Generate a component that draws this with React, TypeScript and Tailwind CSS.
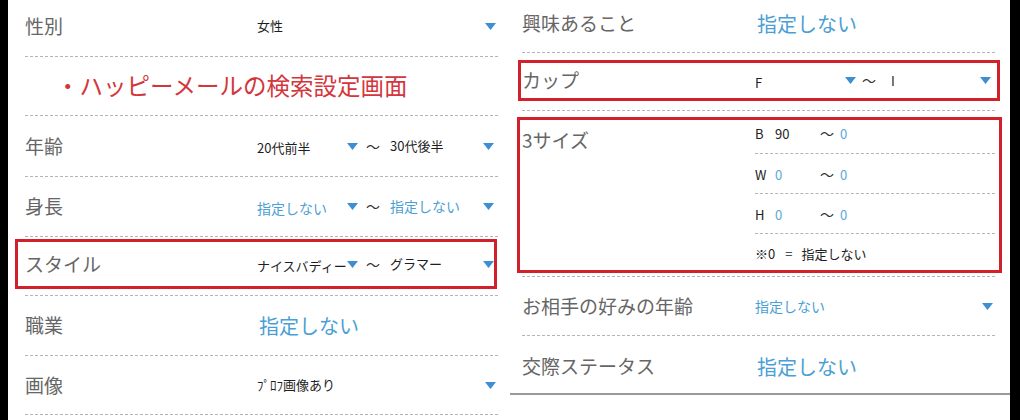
const font = { fontFamily: '"Noto Sans CJK JP", "Noto Sans", sans-serif' };

function Arrow() {
  return (
    <svg width="11" height="7" viewBox="0 0 11 7" className="shrink-0">
      <polygon points="0,0 11,0 5.5,7" fill="#3d8fd3" />
    </svg>
  );
}

function Value({ text, blue }: { text: string; blue?: boolean }) {
  return blue ? (
    <span className="whitespace-nowrap text-[14px] text-[#4c9fd4]">{text}</span>
  ) : (
    <span className="whitespace-nowrap text-[13px] text-[#1e1e1e]">{text}</span>
  );
}

function Range({
  from,
  to,
  blue,
  w1,
  gap,
  w2,
}: {
  from: string;
  to: string;
  blue?: boolean;
  w1: number;
  gap: number;
  w2: number;
}) {
  return (
    <div className="flex items-center">
      <div className="flex items-center" style={{ width: w1 }}>
        <span className="w-[90px] shrink-0 overflow-visible">
          <Value text={from} blue={blue} />
        </span>
        <span className="ml-auto flex">
          <Arrow />
        </span>
      </div>
      <span className="ml-[8px] w-[16px] text-[14px] text-[#333]">～</span>
      <div className="flex items-center" style={{ width: w2, marginLeft: gap }}>
        <Value text={to} blue={blue} />
        <span className="ml-auto flex">
          <Arrow />
        </span>
      </div>
    </div>
  );
}

function Single({ text, blue }: { text: string; blue?: boolean }) {
  return (
    <div className="flex flex-1 items-center pr-[2px]">
      <Value text={text} blue={blue} />
      <span className="ml-auto flex">
        <Arrow />
      </span>
    </div>
  );
}

function Label({ text, w }: { text: string; w: string }) {
  return <div className={`${w} shrink-0 text-[19px] text-[#666]`}>{text}</div>;
}

const dashed = 'border-b border-dashed border-[#b5b5b5]';

function LeftColumn() {
  return (
    <div className="flex w-[502px] flex-col pl-[17px] pr-[12px]">
      <div className={`flex h-[57px] items-center pb-[4px] ${dashed}`}>
        <Label text="性別" w="w-[232px]" />
        <Single text="女性" />
      </div>
      <div className={`flex h-[59px] items-center pl-[31px] ${dashed}`}>
        <span className="text-[23.5px] text-[#d3363c]">・ハッピーメールの検索設定画面</span>
      </div>
      <div className={`flex h-[61px] items-center ${dashed}`}>
        <Label text="年齢" w="w-[232px]" />
        <Range from="20代前半" to="30代後半" w1={101} gap={8} w2={104} />
      </div>
      <div className={`flex h-[60px] items-center ${dashed}`}>
        <Label text="身長" w="w-[232px]" />
        <Range from="指定しない" to="指定しない" blue w1={101} gap={8} w2={104} />
      </div>
      <div className={`h-[59px] pt-[2px] ${dashed}`}>
        <div className="-ml-[10px] mr-[1px] flex h-[50px] items-center border-[3px] border-[#d3212b] pl-[7px]">
          <Label text="スタイル" w="w-[232px]" />
          <Range from="ナイスバディー" to="グラマー" w1={101} gap={8} w2={104} />
        </div>
      </div>
      <div className={`flex h-[60px] items-center ${dashed}`}>
        <Label text="職業" w="w-[234px]" />
        <span className="text-[20px] text-[#4c9fd4]">指定しない</span>
      </div>
      <div className={`flex h-[59px] items-center ${dashed}`}>
        <Label text="画像" w="w-[232px]" />
        <Single text="ﾌﾟﾛﾌ画像あり" />
      </div>
    </div>
  );
}

function SizeRow({ k, a, b, aBlue }: { k: string; a: string; b: string; aBlue?: boolean }) {
  return (
    <div className="flex items-center text-[13px]">
      <span className="w-[20px] text-[#222]">{k}</span>
      <span className={`w-[45px] ${aBlue ? 'text-[#5aa8d8]' : 'text-[#222]'}`}>{a}</span>
      <span className="w-[20px] text-[14px] text-[#333]">～</span>
      <span className="text-[#5aa8d8]">{b}</span>
    </div>
  );
}

function RightColumn() {
  return (
    <div className="flex w-[500px] flex-col pl-[12px] pr-[15px]">
      <div className={`flex h-[53px] items-center pb-[5px] ${dashed}`}>
        <Label text="興味あること" w="w-[235px]" />
        <span className="text-[20px] text-[#4c9fd4]">指定しない</span>
      </div>
      <div className={`h-[58px] pt-[7px] ${dashed}`}>
        <div className="-ml-[4px] -mr-[5px] flex h-[41px] items-center border-[3px] border-[#d3212b] pl-[1px]">
          <Label text="カップ" w="w-[233px]" />
          <Range from="F" to="I" w1={99} gap={13} w2={100} />
        </div>
      </div>
      <div className={`h-[166px] pt-[6px] ${dashed}`}>
        <div className="-ml-[5px] -mr-[7px] flex h-[156px] border-[3px] border-[#d3212b] pl-[2px] pr-[4px]">
          <div className="w-[233px] shrink-0 pt-[6px] text-[19px] text-[#666]">3サイズ</div>
          <div className="flex flex-1 flex-col">
            <div className={`flex h-[34px] items-center pb-[6px] ${dashed}`}>
              <SizeRow k="B" a="90" b="0" />
            </div>
            <div className={`flex h-[40px] items-center pt-[2px] ${dashed}`}>
              <SizeRow k="W" a="0" b="0" aBlue />
            </div>
            <div className={`flex h-[40px] items-center pt-[2px] ${dashed}`}>
              <SizeRow k="H" a="0" b="0" aBlue />
            </div>
            <div className="flex flex-1 items-center pt-[4px] text-[13px] text-[#1e1e1e]">
              <span>※0</span>
              <span className="ml-[10px]">=</span>
              <span className="ml-[9px]">指定しない</span>
            </div>
          </div>
        </div>
      </div>
      <div className={`flex h-[59px] items-center ${dashed}`}>
        <Label text="お相手の好みの年齢" w="w-[233px]" />
        <Single text="指定しない" blue />
      </div>
      <div className="flex h-[57px] items-center pt-[4px]">
        <Label text="交際ステータス" w="w-[235px]" />
        <span className="text-[20px] text-[#4c9fd4]">指定しない</span>
      </div>
      <div className="-ml-[12px] -mr-[15px] h-[2px] bg-[#9a9a9a]" />
    </div>
  );
}

export default function App() {
  return (
    <div className="flex h-[420px] w-[1020px] overflow-hidden bg-black" style={font}>
      <div className="ml-[8px] flex h-full w-[1002px] bg-white">
        <LeftColumn />
        <RightColumn />
      </div>
    </div>
  );
}
